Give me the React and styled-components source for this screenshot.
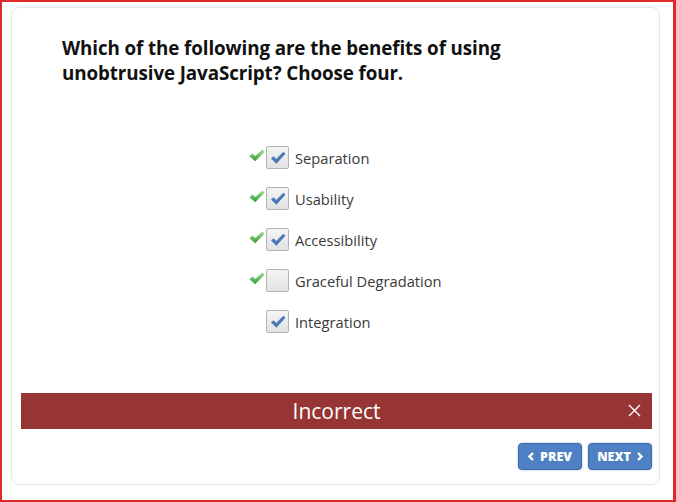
import React from 'react'
import styled, { createGlobalStyle } from 'styled-components'

const GlobalStyle = createGlobalStyle`
  html, body {
    margin: 0;
    padding: 0;
    background: #fff;
  }
  * {
    box-sizing: border-box;
  }
`

const Frame = styled.div`
  width: 676px;
  height: 502px;
  border: 2px solid #dd2a2a;
  border-right-width: 3px;
  padding: 5px 13px 15px 9px;
  font-family: "Open Sans", "Noto Sans", sans-serif;
`

const Card = styled.div`
  height: 100%;
  border: 1px solid #e6e6e6;
  border-radius: 8px;
  display: flex;
  flex-direction: column;
  padding: 0 7px 14px 9px;
`

const Question = styled.h2`
  margin: 28px 0 0 41px;
  font-size: 18.8px;
  line-height: 25px;
  font-weight: 700;
  color: #111;
  letter-spacing: -0.1px;
  width: 480px;
`

const Options = styled.ul`
  list-style: none;
  margin: 60px 0 0 228px;
  padding: 0;
  display: flex;
  flex-direction: column;
  gap: 18px;
`

const Row = styled.li`
  display: flex;
  align-items: center;
  height: 23px;
`

const Mark = styled.span`
  width: 17px;
  height: 14px;
  display: flex;
  align-items: center;
  margin-top: -5px;
`

const Box = styled.span`
  width: 23px;
  height: 23px;
  border: 1px solid #b4b4b4;
  border-radius: 2px;
  background: linear-gradient(#f4f4f4, #e2e2e2);
  display: flex;
  align-items: center;
  justify-content: center;
`

const Label = styled.span`
  margin-left: 6px;
  font-size: 14.7px;
  color: #3a3a3a;
`

const Feedback = styled.div`
  margin-top: auto;
  height: 36px;
  background: #973535;
  color: #fff;
  display: flex;
  align-items: center;
  justify-content: center;
  position: relative;
  font-size: 21px;
  font-weight: 400;
`

const Close = styled.span`
  position: absolute;
  right: 11px;
  top: 11px;
  display: flex;
`

const Nav = styled.div`
  display: flex;
  justify-content: flex-end;
  gap: 6px;
  margin-top: 14px;
`

const NavButton = styled.button`
  height: 27px;
  width: 64px;
  padding: 0;
  border: 1px solid #3c6aa6;
  border-radius: 4px;
  background: #4f80c3;
  box-shadow: 0 0 2px rgba(60, 100, 160, 0.5);
  color: #fff;
  font-family: "Open Sans", sans-serif;
  font-weight: 800;
  font-size: 12.5px;
  display: flex;
  align-items: center;
  justify-content: center;
  gap: 6px;
`

const GreenCheck = () => (
  <svg width="16" height="13" viewBox="0 0 16 13">
    <defs>
      <linearGradient id="gc" x1="0" y1="0" x2="0" y2="1">
        <stop offset="0" stopColor="#9be394" />
        <stop offset="1" stopColor="#3a993a" />
      </linearGradient>
    </defs>
    <path d="M0.4 7.2 L3.4 4.4 L6.2 7 L13.4 0.4 L15.6 2.8 L6.2 12.2 Z" fill="url(#gc)" />
  </svg>
)

const BlueCheck = () => (
  <svg width="16" height="14" viewBox="0 0 16 14">
    <path d="M1 7.6 L3.6 5.2 L6.2 8 L13.4 0.8 L15.4 2.8 L6.4 12.8 Z" fill="#4a78b8" />
  </svg>
)

const Chevron = ({ dir }) => (
  <svg width="6" height="9" viewBox="0 0 6 9">
    <path
      d={dir === 'left' ? 'M5 1 L1.5 4.5 L5 8' : 'M1 1 L4.5 4.5 L1 8'}
      stroke="#fff"
      strokeWidth="2.4"
      fill="none"
    />
  </svg>
)

const options = [
  { label: 'Separation', correct: true, checked: true },
  { label: 'Usability', correct: true, checked: true },
  { label: 'Accessibility', correct: true, checked: true },
  { label: 'Graceful Degradation', correct: true, checked: false },
  { label: 'Integration', correct: false, checked: true },
]

export default function App () {
  return (
    <Frame>
      <GlobalStyle />
      <Card>
        <Question>
          Which of the following are the benefits of using unobtrusive JavaScript? Choose four.
        </Question>
        <Options>
          {options.map((o) => (
            <Row key={o.label}>
              <Mark>{o.correct && <GreenCheck />}</Mark>
              <Box>{o.checked && <BlueCheck />}</Box>
              <Label>{o.label}</Label>
            </Row>
          ))}
        </Options>
        <Feedback>
          Incorrect
          <Close>
            <svg width="13" height="13" viewBox="0 0 13 13">
              <path d="M1 1 L12 12 M12 1 L1 12" stroke="#fff" strokeWidth="1.4" />
            </svg>
          </Close>
        </Feedback>
        <Nav>
          <NavButton>
            <Chevron dir="left" />
            PREV
          </NavButton>
          <NavButton $next>
            NEXT
            <Chevron dir="right" />
          </NavButton>
        </Nav>
      </Card>
    </Frame>
  )
}
